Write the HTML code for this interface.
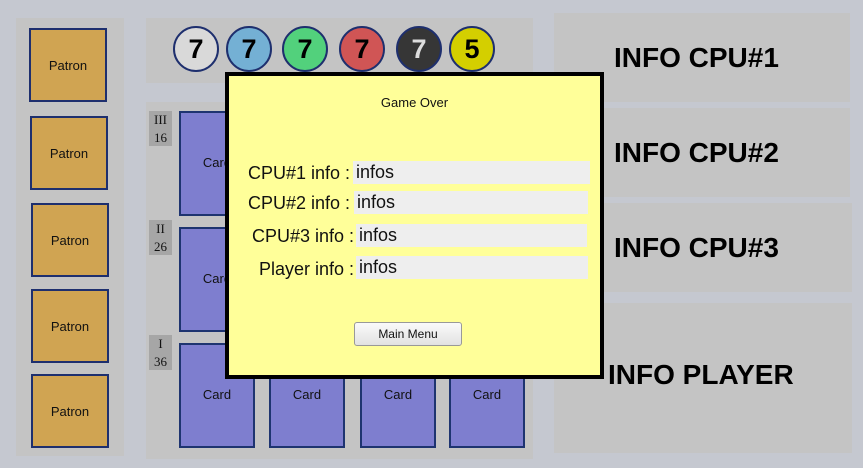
<!DOCTYPE html>
<html><head><meta charset="utf-8"><style>
*{margin:0;padding:0;box-sizing:border-box}
body{width:863px;height:468px;background:#c5c8d0;position:relative;overflow:hidden;font-family:"Liberation Sans",sans-serif}
.a{position:absolute}
.pan{background:#c4c4c4}
.patron{position:absolute;background:#d0a452;border:2px solid #1e2f6e;display:flex;align-items:center;justify-content:center;font-size:13px;color:#111}
.circ{position:absolute;width:46px;height:46px;border-radius:50%;border:2px solid #1e2f6e;top:26px;display:flex;align-items:center;justify-content:center;font-weight:bold;font-size:27px}
.card{position:absolute;width:76px;height:105px;background:#7e7ecf;border:2px solid #1e3470;text-align:center;font-size:13px;color:#111;padding-top:42px}
.lab{position:absolute;left:149px;width:23px;height:35px;background:#a6a6a6;font-family:"Liberation Serif",serif;font-size:13px;text-align:center;line-height:18px;color:#111}
.info{position:absolute;left:614px;font-weight:bold;font-size:28px;color:#000}
.row{position:absolute;font-size:18px;color:#111;white-space:nowrap}
.fld{position:absolute;background:#eeeeee;font-size:18px;line-height:23px;height:23px;padding-left:3px;color:#111}
</style></head><body>
<div class="a pan" style="left:16px;top:18px;width:108px;height:438px"></div>
<div class="patron" style="left:29px;top:28px;width:78px;height:74px">Patron</div>
<div class="patron" style="left:30px;top:116px;width:78px;height:74px">Patron</div>
<div class="patron" style="left:31px;top:203px;width:78px;height:74px">Patron</div>
<div class="patron" style="left:31px;top:289px;width:78px;height:74px">Patron</div>
<div class="patron" style="left:31px;top:374px;width:78px;height:74px">Patron</div>

<div class="a pan" style="left:146px;top:18px;width:387px;height:65px"></div>
<div class="circ" style="left:173px;background:#d9d9d9;color:#000">7</div>
<div class="circ" style="left:226px;background:#74b0d4;color:#000">7</div>
<div class="circ" style="left:282px;background:#52d17c;color:#000">7</div>
<div class="circ" style="left:339px;background:#d05555;color:#000">7</div>
<div class="circ" style="left:396px;background:#363636;color:#ddd">7</div>
<div class="circ" style="left:449px;background:#d4cf00;color:#000">5</div>

<div class="a pan" style="left:146px;top:102px;width:387px;height:357px"></div>
<div class="lab" style="top:111px">III<br>16</div>
<div class="lab" style="top:220px">II<br>26</div>
<div class="lab" style="top:335px">I<br>36</div>
<div class="card" style="left:179px;top:111px">Card</div>
<div class="card" style="left:179px;top:227px">Card</div>
<div class="card" style="left:179px;top:343px">Card</div>
<div class="card" style="left:269px;top:343px">Card</div>
<div class="card" style="left:360px;top:343px">Card</div>
<div class="card" style="left:449px;top:343px">Card</div>

<div class="a pan" style="left:554px;top:13px;width:296px;height:89px"></div>
<div class="a pan" style="left:554px;top:108px;width:296px;height:89px"></div>
<div class="a pan" style="left:554px;top:203px;width:298px;height:89px"></div>
<div class="a pan" style="left:554px;top:303px;width:298px;height:150px"></div>
<div class="info" style="top:42px">INFO CPU#1</div>
<div class="info" style="top:137px">INFO CPU#2</div>
<div class="info" style="top:232px">INFO CPU#3</div>

<div class="a" style="left:225px;top:72px;width:379px;height:307px;background:#ffff99;border:4px solid #000">
<div style="position:absolute;left:0;right:0;top:19px;text-align:center;font-size:13px;color:#111">Game Over</div>
</div>
<div class="row" style="left:248px;top:163px">CPU#1 info :</div>
<div class="fld" style="left:353px;top:161px;width:237px">infos</div>
<div class="row" style="left:248px;top:193px">CPU#2 info :</div>
<div class="fld" style="left:354px;top:191px;width:234px">infos</div>
<div class="row" style="left:252px;top:226px">CPU#3 info :</div>
<div class="fld" style="left:356px;top:224px;width:231px">infos</div>
<div class="row" style="left:259px;top:259px">Player info :</div>
<div class="fld" style="left:356px;top:256px;width:232px">infos</div>
<div class="a" style="left:354px;top:322px;width:108px;height:24px;border:1px solid #999;border-radius:3px;background:linear-gradient(#fafafa,#e2e2e2);font-size:12px;text-align:center;line-height:22px;color:#111">Main Menu</div>

<div class="info" style="left:608px;top:359px">INFO PLAYER</div>
</body></html>
